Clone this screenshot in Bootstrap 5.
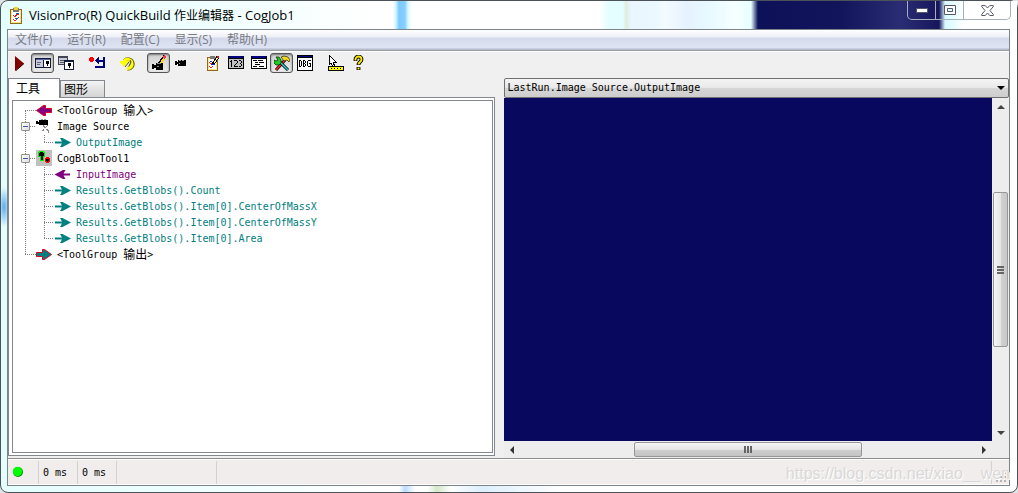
<!DOCTYPE html>
<html lang="zh-CN">
<head>
<meta charset="utf-8">
<meta name="viewport" content="width=device-width, initial-scale=1">
<title>VisionPro(R) QuickBuild 作业编辑器 - CogJob1</title>
<link href="https://cdn.jsdelivr.net/npm/bootstrap@5.3.0/dist/css/bootstrap.min.css" rel="stylesheet">
<style>
:root{--ui:"Open Sans","Noto Sans CJK SC",sans-serif;--fixed:"DejaVu Sans Mono","Noto Sans CJK SC",monospace;--line:#828790;--face:#f0f0f0}
body{font:12px/16px var(--ui);background:#dfe3e6;color:#000}
button{font:inherit;color:inherit;padding:0;border:0;background:none;border-radius:0}
svg{display:block;flex:none}
.pix{shape-rendering:crispEdges}
.app-window{min-height:100vh;border:1px solid #4c5358;border-radius:8px;padding:0 7px 6px 6px;
 background:
 radial-gradient(ellipse 6px 20px at 3px 206px,#58acf0,transparent) no-repeat,
 linear-gradient(90deg,transparent 8px,#b8dcff 14px,transparent 24px,transparent 36px,#d4e8c8 46px,transparent 60px,#dceffc 90px,transparent 170px) 390px 100%/200px 6px no-repeat,
 linear-gradient(90deg,#e4fdfd 0,#effefe 200px,#fff 380px)}
.title-bar{height:28px;margin:0 -7px 0 -6px;padding-left:9px;
 background:linear-gradient(90deg,transparent 392px,#c8f4ff 395px,#7cc8ff 398px,#86d0ff 404px,#d8f8ff 407px,transparent 411px,transparent 598px,#e4fdff 608px,#e4fdff 622px,#e0ecdc 625px,#eaf6ff 630px,#eaf8ff 654px,#f4fbff 664px,#e6f2ff 686px,#e8faff 710px,#f6ffff 735px,#e8ffff 750px,#0d1158 757px,#12145c 840px,#2b2d74 900px,#15165c 938px,#d8f8ff 944px,#e4fdff 952px,#fff 962px)}
.title-icon{margin-top:6px}
.title-text{font-size:13px;margin-left:6px}
.caption-buttons{height:19px;width:104px;margin-right:6px;border:1px solid #a9b0bd;border-top:0;border-radius:0 0 5px 5px;overflow:hidden}
.caption-buttons button{flex:1 1 0;display:flex;justify-content:center;align-items:center;border-right:1px solid #a9b0bd}
.caption-buttons button:last-child{flex:0 0 46px;border-right:0}
.client{border:1px solid #7d838a;background:var(--face)}
.menu-strip{height:20px;gap:15px;padding:0 7px;background:linear-gradient(#fff,#eef0f8 7px,#d5daec 8px,#dfe4f4 18px,#b6bccc 19px)}
.menu-strip button{color:#777b83}
.tool-strip{height:28px;border-top:1px solid #a0a0a0;box-shadow:inset 0 1px #fff;padding-top:2px}
.tool-strip button{width:23px;height:20px;padding:0 0 0 3px;border:1px solid transparent;border-radius:3px}
.tool-strip button.pressed{border-color:#555;background:linear-gradient(#d2d2d2,#e9e9e9);box-shadow:inset 0 1px 2px #777}
.tool-strip .gap-before{margin-left:8px}
.panes{display:grid;grid-template-columns:minmax(0,487fr) minmax(0,506fr);column-gap:9px}
.tab-row{height:20px}
.tab-row button{border:1px solid var(--line);border-bottom:0;height:18px;width:45px;background:linear-gradient(#f4f4f4,#e2e2e2 50%,#d4d4d4);text-align:left;padding-left:3px}
.tab-row button.current{height:20px;width:52px;background:#fff;padding-left:7px}
.tab-line{border-top:1px solid var(--line);margin-left:51px;height:1px;margin-top:-1px}
.tab-page{border:1px solid var(--line);border-top:0;background:#fff;padding:2px 1px 2px 3px;margin-bottom:2px}
.tree-box{border:1px solid var(--line);background:#fff;padding-top:2px}
.tree,.tree ul{list-style:none;margin:0;padding:0;font:10px/16px var(--fixed);background-image:repeating-linear-gradient(#808080 0 1px,transparent 1px 2px);background-repeat:no-repeat}
.tree{background-position:12px 8px;background-size:1px calc(100% - 17px)}
.tree ul{padding-left:31px;background-position:31px 0;background-size:1px calc(100% - 8px)}
.node{height:16px;display:flex;align-items:center;white-space:nowrap}
.node svg{margin-right:5px}
.node svg,.dots,.expander{margin-bottom:2px}
.dots{width:11px;height:1px;flex:none;background:repeating-linear-gradient(90deg,#808080 0 1px,transparent 1px 2px)}
.tree ul .dots{width:10px}
.tree>li>.node{padding-left:12px}
.tree>li>.node.branch{padding-left:8px}
.branch .dots{width:6px}
.expander{width:9px;height:9px;flex:none;border:1px solid #919191;border-radius:1px;background:linear-gradient(#3a5ba8,#3a5ba8) center/5px 1px no-repeat,linear-gradient(135deg,#fff,#dcdcdc)}
.han{font-size:12px}
.outp{color:#008080}.inp{color:#800080}
.select-wrap{position:relative}
.select-wrap svg{position:absolute;right:4px;top:8px;pointer-events:none}
.source-select{display:block;width:100%;height:20px;border:1px solid #707070;border-radius:2px;appearance:none;padding:0 20px 0 3px;font:10px/16px var(--fixed);color:#000;background:linear-gradient(#f4f4f4,#e8e8e8 50%,#d6d6d6 51%,#cdcdcd)}
.viewer{display:grid;grid-template-columns:minmax(0,1fr) 17px;grid-template-rows:minmax(0,1fr) 17px}
.canvas-area{background:#08085f}
.bar{background:#ededed;display:flex}
.bar.vert{flex-direction:column}
.bar button{flex:none;width:17px;height:17px;display:flex;align-items:center;justify-content:center}
.rest{flex:1 1 0}
.thumb{flex:2 1 0;border:1px solid #979797;border-radius:2px;display:flex;align-items:center;justify-content:center;background:linear-gradient(#f5f5f5,#e4e4e4 50%,#cfcfcf 51%,#c4c4c4);margin:1px 0}
.vert .thumb{background:linear-gradient(90deg,#f5f5f5,#e6e6e6 50%,#d2d2d2 51%,#c8c8c8);margin:0 1px}
.status-strip{height:27px;grid-template-columns:31px 39px 39px 100px 1fr 17px;border-top:1px solid #8c8c8c;background:#f0edec;box-shadow:inset 0 1px #fff,inset 0 -1px #fff;padding:2px 0 1px;font:10px/23px var(--fixed);position:relative}
.status-strip div{border-right:1px solid #d2d2d2;padding-left:4px}
.watermark{position:absolute;right:-1px;top:4px;font:16px/22px "Liberation Sans",sans-serif;color:#dad8d8;text-shadow:1px 1px #fff;white-space:nowrap}
</style>
</head>
<body>
<main class="app-window d-flex flex-column">
 <header class="title-bar d-flex">
  <svg width="13" height="18" viewBox="0 0 13 18" class="pix title-icon"><path fill="#8c6a1e" d="M0 2h12v15H0z"/><path fill="#ffe680" d="M1 3h10v13H1z"/><path fill="#fff" d="M2 4h8v11H2z"/><path fill="#777" d="M3 1h6v4H3z"/><path fill="#f2d030" d="M4 0h4v3H4z"/><path d="M3 8l2 2 2-3 2 1M3 12l2 2 4-4" stroke="#d22" fill="none"/><path d="M6 6l3 1M5 11l3 1" stroke="#25b"/></svg>
  <div class="title-text flex-grow-1 align-self-center">VisionPro(R) QuickBuild <span class="han">作业编辑器</span> - CogJob1</div>
  <div class="caption-buttons d-flex">
   <button type="button" aria-label="最小化"><svg width="12" height="6" viewBox="0 0 12 6"><rect x=".5" y="1.5" width="11" height="4" fill="#fff" stroke="#535666"/></svg></button>
   <button type="button" aria-label="最大化"><svg width="12" height="10" viewBox="0 0 12 10"><path d="M.5.5h11v9H.5zM3.500 3.500v3h5v-3z" fill="#fff" fill-rule="evenodd" stroke="#535666"/></svg></button>
   <button type="button" aria-label="关闭"><svg width="13" height="11" viewBox="0 0 13 11"><path d="M.7.6h3.600L6.500 3 8.700.6h3.600v1L9 5.500l3.300 4v1H8.700L6.500 8l-2.200 2.500H.7v-1L4 5.500.7 1.600z" fill="#fff" stroke="#535666"/></svg></button>
  </div>
 </header>

 <section class="client d-flex flex-column flex-grow-1">
  <nav class="menu-strip d-flex align-items-center" aria-label="菜单">
   <button type="button">文件(F)</button><button type="button">运行(R)</button><button type="button">配置(C)</button><button type="button">显示(S)</button><button type="button">帮助(H)</button>
  </nav>

  <div class="tool-strip d-flex" role="toolbar" aria-label="工具栏">
   <button type="button" aria-label="运行"><svg width="16" height="16"><path d="M3 1v15l9-7.500z" fill="#800000"/><path d="M3.500 16l8.500-7.500" stroke="#300"/></svg></button>
   <button type="button" class="pressed" aria-label="显示图像"><svg class="pix" width="16" height="16"><path fill="#111a3a" d="M0 3h16v10H0z"/><path fill="#c8ccd8" d="M1 5h7v7H1z"/><path fill="#fff" d="M9 5h6v7H9z"/><path fill="#5560a0" d="M1 4h14v1H1z"/><path fill="#667" d="M2 7h4v1H2zM2 9h3v1H2z"/><path d="M11 6h3v3h-1v2h-1V9h-1z"/></svg></button>
   <button type="button" aria-label="浮动窗口"><svg class="pix" width="16" height="16"><path fill="#445" d="M0 1h10v9H0z"/><path fill="#c8ccd8" d="M1 3h8v6H1z"/><path fill="#555" d="M2 5h5v1H2zM2 7h4v1H2z"/><path fill="#111a3a" d="M6 5h10v10H6z"/><path fill="#fff" d="M7 7h8v7H7z"/><path d="M10 8h3v3h-1v2h-1v-2h-1z"/></svg></button>
   <button type="button" class="gap-before" aria-label="重置"><svg class="pix" width="16" height="16"><path fill="#f00" d="M1 2h3v1h1v3H4v1H1V6H0V3h1z"/><path fill="#000080" d="M14 2h2v11H6v-2h8V7h-4v2H9V8H8V7H7V6H6V5h1V4h1V3h1V2h1v3h4z"/></svg></button>
   <button type="button" class="gap-before" aria-label="还原"><svg width="16" height="16"><path d="M4.500 6a4.600 4.600 0 1 1 3 7.500" fill="none" stroke="#666000" stroke-width="4"/><path d="M4 6a4.600 4.600 0 1 1 3 7.500" fill="none" stroke="#ff0" stroke-width="3"/><path fill="#ff0" d="M-1 6h10l-5 6z"/><path d="M5 12l4-5M10 5l1 2-2 4" fill="none" stroke="#444"/></svg></button>
   <button type="button" class="gap-before pressed" aria-label="编辑图像"><svg class="pix" width="16" height="16"><path d="M1 9h2v1h2V8h7v7H5v-2H3v1H1z"/><path d="M8 9l6-8" stroke="#000" stroke-width="3"/><path d="M10 8l4-6" stroke="#ffd820" stroke-width="2"/><path d="M12 1l2-1 1 2-2 2z" fill="#f33"/><path fill="#888" d="M6 8h4v1H6zM6 11h2v1H6z"/></svg></button>
   <button type="button" aria-label="相机"><svg class="pix" width="16" height="16"><path d="M1 6h2v1h1V5h8v6H4V9H3v1H1z"/><path fill="#aaa" d="M5 5h2v1H5zM8 5h2v1H8zM5 8h1v1H5z"/></svg></button>
   <button type="button" class="gap-before" aria-label="属性"><svg class="pix" width="16" height="16"><path fill="#8c6a1e" d="M2 2h11v14H2z"/><path fill="#ffe680" d="M3 3h9v12H3z"/><path fill="#fff" d="M4 4h7v10H4z"/><path fill="#777" d="M5 1h5v3H5z"/><path d="M4 7l2 2 3-2M4 11l2 2 2-2" fill="none" stroke="#e22"/><path d="M5 6l2 1M6 10l4-1" stroke="#22c"/><path d="M8 9l5-7" stroke="#000" stroke-width="3"/><path d="M9 8l4-6" stroke="#ff9"/><path fill="#c22" d="M12 1h2v2h-2z"/></svg></button>
   <button type="button" aria-label="数值"><svg class="pix" width="16" height="16"><path d="M0 1h16v13H0z"/><path fill="#c0c0c0" d="M1 4h14v9H1z"/><path fill="#000080" d="M1 1h14v2H1z"/><path d="M3 5h1v7H3zM2 6h1v1H2zM6 5h3v1H6zM9 6h1v2H9zM8 8h1v1H8zM7 9h1v1H7zM6 10h1v1H6zM6 11h4v1H6zM11 5h2v1h-2zM13 6h1v2h-1zM12 8h1v1h-1zM13 9h1v2h-1zM11 11h2v1h-2z"/></svg></button>
   <button type="button" aria-label="列表"><svg class="pix" width="16" height="16"><path d="M0 1h16v13H0z"/><path fill="#fff" d="M1 4h14v9H1z"/><path fill="#000080" d="M1 1h14v2H1z"/><path d="M2 5h4v1H2zM7 5h5v1H7zM4 7h3v1H4zM8 7h5v1H8zM4 9h5v1H4zM2 11h4v1H2zM8 11h5v1H8z"/></svg></button>
   <button type="button" class="pressed" aria-label="工具箱"><svg width="16" height="16"><path d="M2 15L11 5" stroke="#000" stroke-width="3"/><path d="M2 15L11 5" stroke="#f23" stroke-width="1.600"/><path d="M5 6l9 9" stroke="#000" stroke-width="3"/><path d="M5 6l9 9" stroke="#2cc" stroke-width="1.600"/><path d="M2 2l2 3-2 1-2-1v3l2 2h3l2-2V5L5 2z" fill="#2c2" stroke="#030" stroke-width=".8"/><path d="M7 2l3-1 4 1 2 3-1 2-2-2-3 1z" fill="#f0d820" stroke="#220" stroke-width=".7"/></svg></button>
   <button type="button" aria-label="调试"><svg class="pix" width="16" height="16"><path d="M0 0h16v16H0z"/><path fill="#fff" d="M1 3h14v12H1z"/><path fill="#000080" d="M1 1h14v1H1z"/><path d="M2 5h1v7H2zM3 5h1v1H3zM3 11h1v1H3zM4 6h1v5H4zM6 5h1v7H6zM7 5h1v1H7zM7 8h1v1H7zM7 11h1v1H7zM8 6h1v2H8zM8 9h1v2H8zM11 5h3v1h-3zM10 6h1v5h-1zM11 11h3v1h-3zM13 8h1v3h-1zM12 8h1v1h-1z"/></svg></button>
   <button type="button" class="gap-before" aria-label="定位"><svg class="pix" width="16" height="16"><path d="M1 0v10l2-2 2 4h2L5 7h3z" fill="#fff" stroke="#000"/><path d="M0 11h16v5H0z"/><path fill="#ff0" d="M1 12h14v3H1z"/><path d="M3 13h1v1H3zM6 13h1v1H6zM9 13h1v1H9zM12 13h1v1h-1z"/></svg></button>
   <button type="button" aria-label="帮助"><svg width="16" height="16"><path d="M4.500 6V4.500a3 3 0 0 1 6 0c0 2.500-3 2.500-3 5.500M7.500 12v3" fill="none" stroke="#000" stroke-width="3.800"/><path d="M4.500 5.500v-1a3 3 0 0 1 6 0c0 2.500-3 2.500-3 5M7.500 12.500v2" fill="none" stroke="#ffe800" stroke-width="1.900"/></svg></button>
  </div>

  <div class="panes flex-grow-1">
   <section class="d-flex flex-column">
    <div class="tab-row d-flex align-items-end" role="tablist">
     <button type="button" role="tab" class="current" aria-selected="true">工具</button><button type="button" role="tab" aria-selected="false">图形</button>
    </div>
    <div class="tab-line"></div>
    <div class="tab-page flex-grow-1 d-flex flex-column">
     <div class="tree-box flex-grow-1">
      <ul class="tree">
       <li><div class="node"><span class="dots"></span><svg width="16" height="16"><path d="M.5 8.500l7-5h2v3h6v4h-6v3h-2z" fill="#800080" stroke="#e00020"/></svg>&lt;ToolGroup&nbsp;<span class="han">输入</span>&gt;</div></li>
       <li><div class="node branch"><button type="button" class="expander" aria-label="折叠 Image Source"></button><span class="dots"></span><svg class="pix" width="16" height="16"><path d="M0 3h2v1h1V2h9v5H3V6H0z"/><path fill="#999" d="M5 1h2v1H5zM8 1h2v1H8z"/><path d="M7 7l2 3M12 7l-3 3M8 11H7v1H6v1M10 11h1v1h1v3" fill="none" stroke="#888"/></svg>Image Source</div>
        <ul><li class="node outp"><span class="dots"></span><svg width="17" height="16"><path d="M1 7.500h7L6 4h2.500L17 8.500 8.500 13H6l2-3.500H1z" fill="#008080"/></svg>OutputImage</li></ul></li>
       <li><div class="node branch"><button type="button" class="expander" aria-label="折叠 CogBlobTool1"></button><span class="dots"></span><svg class="pix" width="16" height="16"><path fill="#c0c0c0" d="M0 0h16v16H0z"/><path fill="#0e0" d="M3 1h5v1h1v5H8v4H4V7H2V2h1z"/><path d="M4 2h3v1h1v3H7v4H5V6H3V3h1z"/><path fill="#f00" d="M10 7h3v1h1v4h-1v1h-3v-1H9V8h1z"/><path d="M10 9h3v2h-1v1h-1v-1h-1z"/></svg>CogBlobTool1</div>
        <ul>
         <li class="node inp"><span class="dots"></span><svg width="17" height="16"><path d="M16 7.500H9.500l2-3.500H9L.5 8.500 9 13h2.500l-2-3.500H16z" fill="#800080"/></svg>InputImage</li>
         <li class="node outp"><span class="dots"></span><svg width="17" height="16"><path d="M1 7.500h7L6 4h2.500L17 8.500 8.500 13H6l2-3.500H1z" fill="#008080"/></svg>Results.GetBlobs().Count</li>
         <li class="node outp"><span class="dots"></span><svg width="17" height="16"><path d="M1 7.500h7L6 4h2.500L17 8.500 8.500 13H6l2-3.500H1z" fill="#008080"/></svg>Results.GetBlobs().Item[0].CenterOfMassX</li>
         <li class="node outp"><span class="dots"></span><svg width="17" height="16"><path d="M1 7.500h7L6 4h2.500L17 8.500 8.500 13H6l2-3.500H1z" fill="#008080"/></svg>Results.GetBlobs().Item[0].CenterOfMassY</li>
         <li class="node outp"><span class="dots"></span><svg width="17" height="16"><path d="M1 7.500h7L6 4h2.500L17 8.500 8.500 13H6l2-3.500H1z" fill="#008080"/></svg>Results.GetBlobs().Item[0].Area</li>
        </ul></li>
       <li><div class="node"><span class="dots"></span><svg width="16" height="16"><path d="M15.500 8.500l-7-5h-2v3h-6v4h6v3h2z" fill="#008080" stroke="#e00020"/></svg>&lt;ToolGroup&nbsp;<span class="han">输出</span>&gt;</div></li>
      </ul>
     </div>
    </div>
   </section>

   <section class="d-flex flex-column">
    <div class="select-wrap"><select class="source-select" aria-label="图像来源"><option>LastRun.Image Source.OutputImage</option></select><svg width="8" height="4"><path d="M0 0h8L4 4z"/></svg></div>
    <div class="viewer flex-grow-1">
     <div class="canvas-area"></div>
     <div class="bar vert">
      <button type="button" aria-label="向上"><svg width="8" height="4"><path d="M4 0l4 4H0z" fill="#444"/></svg></button>
      <div class="rest"></div><div class="thumb"><svg class="pix" width="7" height="8"><path d="M0 0h7v2H0zM0 3h7v2H0zM0 6h7v2H0z" fill="#666"/></svg></div><div class="rest"></div>
      <button type="button" aria-label="向下"><svg width="8" height="4"><path d="M4 4l4-4H0z" fill="#444"/></svg></button>
     </div>
     <div class="bar">
      <button type="button" aria-label="向左"><svg width="4" height="8"><path d="M0 4l4-4v8z" fill="#333"/></svg></button>
      <div class="rest"></div><div class="thumb"><svg class="pix" width="8" height="7"><path d="M0 0h2v7H0zM3 0h2v7H3zM6 0h2v7H6z" fill="#666"/></svg></div><div class="rest"></div>
      <button type="button" aria-label="向右"><svg width="4" height="8"><path d="M4 4L0 0v8z" fill="#333"/></svg></button>
     </div>
     <div class="bar"></div>
    </div>
   </section>
  </div>

  <footer class="status-strip d-grid">
   <div><svg width="12" height="23"><circle cx="6" cy="11" r="5" fill="#080"/><circle cx="5.500" cy="10.500" r="4.700" fill="#0f0"/></svg></div>
   <div>0 ms</div><div>0 ms</div><div></div><div></div>
   <svg class="pix align-self-end" width="16" height="16"><path d="M12 4h2v2h-2zM8 8h2v2H8zM12 8h2v2h-2zM4 12h2v2H4zM8 12h2v2H8zM12 12h2v2h-2z" fill="#b4b2b2"/></svg>
   <span class="watermark">https://blog.csdn.net/xiao__wen</span>
  </footer>
 </section>
</main>
<script src="https://cdn.jsdelivr.net/npm/bootstrap@5.3.0/dist/js/bootstrap.bundle.min.js"></script>
</body>
</html>
